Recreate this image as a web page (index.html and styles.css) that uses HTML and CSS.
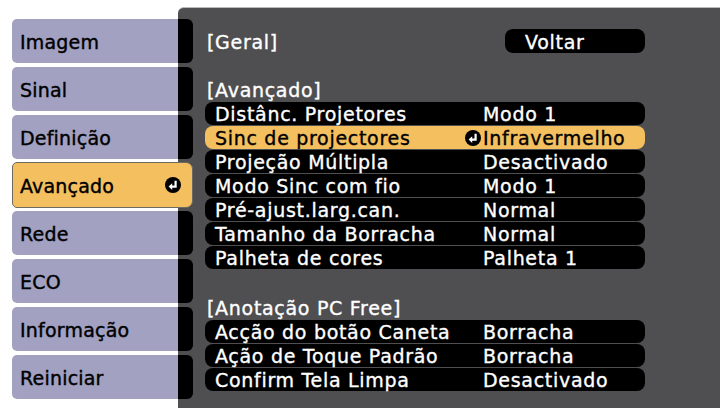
FILE: index.html
```html
<!DOCTYPE html>
<html lang="pt">
<head>
<meta charset="utf-8">
<title>Avançado</title>
<link rel="stylesheet" href="styles.css">
</head>
<body>
<div class="screen">
  <nav class="tabs">
    <div class="tab"><span class="tab-label">Imagem</span><span class="stub"></span></div>
    <div class="tab"><span class="tab-label">Sinal</span><span class="stub"></span></div>
    <div class="tab"><span class="tab-label">Definição</span><span class="stub"></span></div>
    <div class="tab active"><span class="tab-label">Avançado</span>
      <svg class="enter" viewBox="0 0 16 16" width="16" height="16"><circle cx="8" cy="8" r="8" fill="#000"/><path d="M10.6 3.8V9.6H6.2" fill="none" stroke="#fff" stroke-width="2.2"/><path d="M7.2 6.2L3.6 9.6L7.2 13Z" fill="#fff"/></svg>
    </div>
    <div class="tab"><span class="tab-label">Rede</span><span class="stub"></span></div>
    <div class="tab"><span class="tab-label">ECO</span><span class="stub"></span></div>
    <div class="tab"><span class="tab-label">Informação</span><span class="stub"></span></div>
    <div class="tab"><span class="tab-label">Reiniciar</span><span class="stub"></span></div>
  </nav>
  <main class="panel">
    <div class="top-row"><span class="heading">[Geral]</span><span class="btn">Voltar</span></div>
    <section class="group">
      <div class="heading">[Avançado]</div>
      <ul class="rows">
        <li class="row"><span class="label">Distânc. Projetores</span><span class="value">Modo 1</span></li>
        <li class="row selected"><span class="label">Sinc de projectores<svg class="enter" viewBox="0 0 16 16" width="16" height="16"><circle cx="8" cy="8" r="8" fill="#000"/><path d="M10.6 3.8V9.6H6.2" fill="none" stroke="#fff" stroke-width="2.2"/><path d="M7.2 6.2L3.6 9.6L7.2 13Z" fill="#fff"/></svg></span><span class="value">Infravermelho</span></li>
        <li class="row"><span class="label">Projeção Múltipla</span><span class="value">Desactivado</span></li>
        <li class="row"><span class="label">Modo Sinc com fio</span><span class="value">Modo 1</span></li>
        <li class="row"><span class="label">Pré-ajust.larg.can.</span><span class="value">Normal</span></li>
        <li class="row"><span class="label">Tamanho da Borracha</span><span class="value">Normal</span></li>
        <li class="row"><span class="label">Palheta de cores</span><span class="value">Palheta 1</span></li>
      </ul>
    </section>
    <section class="group group-second">
      <div class="heading">[Anotação PC Free]</div>
      <ul class="rows">
        <li class="row"><span class="label">Acção do botão Caneta</span><span class="value">Borracha</span></li>
        <li class="row"><span class="label">Ação de Toque Padrão</span><span class="value">Borracha</span></li>
        <li class="row"><span class="label">Confirm Tela Limpa</span><span class="value">Desactivado</span></li>
      </ul>
    </section>
  </main>
</div>
</body>
</html>
```
FILE: styles.css
```css
* { box-sizing: border-box; }

html, body {
  margin: 0;
  padding: 0;
  background: #ffffff;
}

body {
  width: 720px;
  height: 408px;
  overflow: hidden;
  font-family: "DejaVu Sans", "Verdana", sans-serif;
}

.screen {
  display: flex;
  height: 408px;
  padding-top: 7px;
}

/* left tabs */
.tabs {
  position: relative;
  z-index: 1;
  width: 181px;
  margin-left: 12px;
  margin-right: -15px;
  padding-top: 12px;
  display: flex;
  flex-direction: column;
  gap: 4px;
  flex: none;
}

.tab {
  display: flex;
  height: 44px;
}

.tab-label {
  width: 166px;
  flex: none;
  background: #a2a1c2;
  border-radius: 5px 0 0 5px;
  padding-left: 8px;
  padding-top: 1px;
  line-height: 44px;
  font-size: 19px;
  letter-spacing: 0.2px;
  color: #000;
  -webkit-text-stroke: 0.4px currentColor;
}

.stub {
  width: 15px;
  flex: none;
  background: #000;
  border-radius: 0 6px 6px 0;
}

.tab.active {
  background: #f4bf5f;
  border: 1px solid #6e6a62;
  border-radius: 5px 7px 7px 5px;
  align-items: center;
  margin: -1px 0;
  height: 46px;
}

.tab.active .tab-label {
  background: transparent;
  width: auto;
  flex: 1;
  padding-left: 7px;
}

.tab.active .enter {
  margin-right: 11px;
}

.enter {
  display: block;
  flex: none;
}

/* right panel */
.panel {
  flex: 1;
  background: #4f4f51;
  border-top: 1px solid #b9b9b9;
  border-top-left-radius: 6px;
  padding: 21px 0 0 27px;
  color: #fff;
  font-size: 19px;
  letter-spacing: 0.7px;
  -webkit-text-stroke: 0.35px currentColor;
}

.top-row {
  display: flex;
  width: 440px;
  height: 24px;
  align-items: center;
}

.heading {
  padding-left: 2px;
  line-height: 24px;
  padding-top: 1px;
}

.btn {
  margin-left: auto;
  width: 140px;
  height: 24px;
  line-height: 24px;
  padding-top: 1px;
  background: #000;
  border-radius: 8px;
  padding-left: 20px;
}

.group {
  margin-top: 24px;
}

.group-second {
  margin-top: 26px;
}

.rows {
  list-style: none;
  margin: 0;
  padding: 0;
}

.row {
  display: flex;
  width: 440px;
  height: 23px;
  margin-bottom: 1px;
  background: #000;
  border-radius: 8px;
  line-height: 23px;
  padding-top: 1px;
}

.label {
  width: 278px;
  flex: none;
  padding-left: 10px;
  padding-right: 2px;
  display: flex;
  align-items: center;
  justify-content: space-between;
}

.value {
  flex: 1;
}

.row.selected {
  background: #f4bf5f;
  color: #000;
}
```
